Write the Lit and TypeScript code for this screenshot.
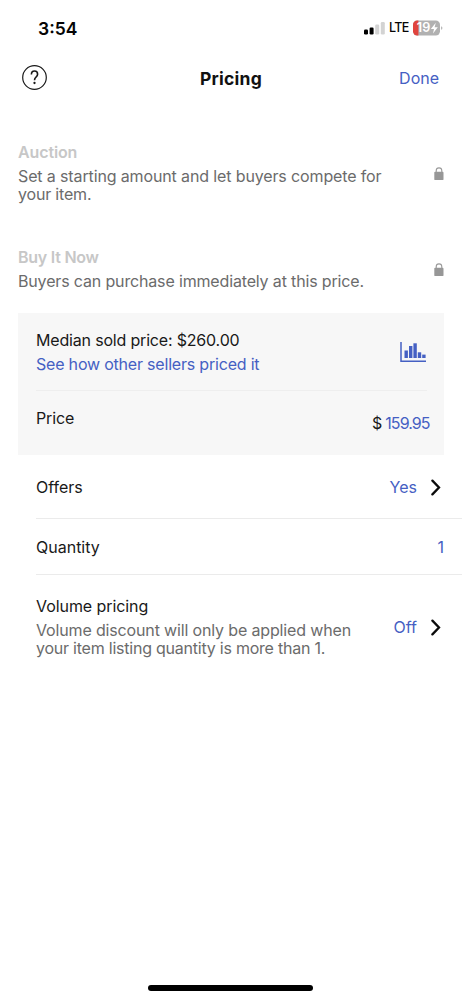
import { LitElement, html, css, svg } from "lit";
import { customElement } from "lit/decorators.js";

@customElement("status-bar")
class StatusBar extends LitElement {
  static styles = css`
    :host { display: flex; height: 56px; box-sizing: border-box; padding: 0 19px 0 38px; justify-content: space-between; align-items: center; color: #050505; }
    .time { font-size: 17.5px; font-weight: 600; line-height: 20px; padding-top: 1px; }
    .right { display: flex; align-items: center; }
    .signal { display: block; margin-right: 4px; }
    .net { font-size: 12.5px; font-weight: 500; line-height: 16px; width: 24px; letter-spacing: -0.6px; }
    svg { display: block; }
  `;
  render() {
    return html`
      <span class="time">3:54</span>
      <div class="right">
        <svg class="signal" width="21" height="14" viewBox="0 0 21 14">
          <rect x="0" y="8.5" width="4" height="5" rx="1.2" fill="#000" />
          <rect x="5.6" y="6.5" width="4" height="7" rx="1.2" fill="#000" />
          <rect x="11.2" y="3.6" width="4" height="9.9" rx="1.2" fill="#d3d3d3" />
          <rect x="16.8" y="1" width="4" height="12.5" rx="1.2" fill="#d3d3d3" />
        </svg>
        <span class="net">LTE</span>
        <svg width="30" height="16" viewBox="0 0 30 16">
          <defs><clipPath id="shell"><rect x="0" y="0.5" width="27" height="15" rx="4.2" /></clipPath></defs>
          <g clip-path="url(#shell)">
            <rect width="27" height="16" fill="#b1b1b1" />
            <rect width="5.4" height="16" fill="#e0443e" />
          </g>
          <path d="M28.2 6.2c1.6.5 1.6 3.1 0 3.6z" fill="#aaa" />
          <text x="3.8" y="12.4" font-family="Inter, sans-serif" font-size="12.5" font-weight="600" fill="#fff" textLength="13.4" lengthAdjust="spacingAndGlyphs">19</text>
          <path d="M22.8 2.8 17.8 9h3.2l-1 4.4 4.8-6.1h-3.2z" fill="#fff" />
        </svg>
      </div>
    `;
  }
}

const lock = html`<svg width="10" height="14" viewBox="0 0 10 14">
  <path d="M2.2 5.5V3.7a2.8 2.8 0 0 1 5.6 0v1.8" fill="none" stroke="#999" stroke-width="1.1" />
  <rect x="0.3" y="4.8" width="9.2" height="8.3" rx="0.9" fill="#979797" />
</svg>`;

const chevron = html`<svg class="chev" width="10" height="17" viewBox="0 0 10 17">
  <path d="M1.4 1.6 8 8.5 1.4 15.4" fill="none" stroke="#0b0b0b" stroke-width="2.3" stroke-linecap="round" stroke-linejoin="miter" />
</svg>`;

const bars = [[4.5, 8.5, 7.5], [9, 4, 12], [13.4, 1.3, 14.7], [17.8, 10.3, 5.7], [22.2, 12.6, 3.4]];

@customElement("app-root")
class AppRoot extends LitElement {
  static styles = css`
    :host { display: flex; flex-direction: column; height: 1000px; background: #fff; font-family: Inter, "Open Sans", sans-serif; font-size: 16px; line-height: 19px; color: #191919; overflow: hidden; white-space: nowrap; }
    svg { display: block; }
    .nav { display: grid; grid-template-columns: 100px 1fr 100px; align-items: center; height: 44px; padding: 0 23px 0 22px; }
    .nav svg { margin-top: -1px; }
    .title { text-align: center; font-weight: 700; font-size: 17.5px; letter-spacing: 0.25px; color: #111; padding: 1px 0 0 1px; }
    .done { text-align: right; }
    .blue { color: #4560c3; }
    .format { display: flex; justify-content: space-between; padding: 0 18px; }
    .auction { margin-top: 43px; height: 105px; box-sizing: border-box; }
    .auction .lock { margin-top: 24px; }
    .bin { height: 65px; }
    .bin .lock { margin-top: 15px; }
    .name { font-weight: 600; color: #c7c7c7; margin-bottom: 4.5px; }
    .desc { color: #6b6b6b; line-height: 18.5px; }
    .panel { margin: 0 18px; height: 142px; background: #f7f7f7; box-sizing: border-box; padding: 18px 14px 0 18px; }
    .median { display: flex; justify-content: space-between; height: 59px; margin-right: 3px; border-bottom: 1px solid #eee; }
    .median .l1 { margin-bottom: 5px; }
    .chart { margin: 11px 1px 0 0; }
    .price { display: flex; justify-content: space-between; padding-top: 18px; }
    .amount { padding-top: 5px; display: flex; gap: 3px; }
    .row { display: flex; justify-content: space-between; align-items: center; margin-left: 36px; padding-right: 18px; box-sizing: border-box; border-bottom: 1px solid #ebebeb; }
    .offers { height: 64px; padding: 1px 21px 0 0; }
    .quantity { height: 56px; padding-top: 1px; }
    .volume { border: 0; height: 105px; padding-right: 21px; }
    .volume .l1 { margin-bottom: 4.5px; }
    .value { display: flex; align-items: center; gap: 14px; }
    .n1 { letter-spacing: -0.12px; }
    .n2 { letter-spacing: -0.25px; }
    .d1 { letter-spacing: -0.13px; }
    .d2 { letter-spacing: -0.18px; }
    .d3 { letter-spacing: -0.155px; }
    .m1 { letter-spacing: -0.18px; }
    .m2 { letter-spacing: -0.2px; }
    .p1 { letter-spacing: -0.15px; }
    .p2 { letter-spacing: -0.95px; margin-right: 0.5px; }
    .v1 { letter-spacing: -0.07px; }
    .v2 { letter-spacing: -0.15px; }
    .v3 { letter-spacing: -0.23px; }
    .home { margin: auto auto 9px 148px; width: 165px; height: 6px; border-radius: 3px; background: #000; }
  `;
  render() {
    return html`
      <status-bar></status-bar>
      <header class="nav">
        <svg width="25" height="25" viewBox="0 0 25 25">
          <circle cx="12.5" cy="12.5" r="11.8" fill="none" stroke="#191919" stroke-width="1.2" />
          <path d="M9.4 9.6c0-2.3 1.2-3.6 3.1-3.6s3.1 1.3 3.1 3.2c0 2.7-3.1 3-3.1 6" fill="none" stroke="#191919" stroke-width="1.6" />
          <circle cx="12.5" cy="18" r="1.15" fill="#191919" />
        </svg>
        <span class="title">Pricing</span>
        <span class="done blue">Done</span>
      </header>
      <section class="format auction">
        <div>
          <div class="name n1">Auction</div>
          <div class="desc d1">Set a starting amount and let buyers compete for</div>
          <div class="desc d2">your item.</div>
        </div>
        <div class="lock">${lock}</div>
      </section>
      <section class="format bin">
        <div>
          <div class="name n2">Buy It Now</div>
          <div class="desc d3">Buyers can purchase immediately at this price.</div>
        </div>
        <div class="lock">${lock}</div>
      </section>
      <section class="panel">
        <div class="median">
          <div>
            <div class="l1 m1">Median sold price: $260.00</div>
            <div class="blue m2">See how other sellers priced it</div>
          </div>
          <svg class="chart" width="26" height="21" viewBox="0 0 26 21">
            <path d="M1 0v19.3h25" fill="none" stroke="#4560c3" stroke-width="1.5" />
            ${bars.map(([x, y, h]) => svg`<rect x=${x} y=${y} width="3.4" height=${h} fill="#4560c3" />`)}
          </svg>
        </div>
        <div class="price">
          <span class="p1">Price</span>
          <span class="amount"><span>$</span><span class="blue p2">159.95</span></span>
        </div>
      </section>
      <section class="row offers">
        <span class="o1">Offers</span>
        <span class="value"><span class="blue o2">Yes</span>${chevron}</span>
      </section>
      <section class="row quantity">
        <span class="q1">Quantity</span>
        <span class="blue">1</span>
      </section>
      <section class="row volume">
        <div>
          <div class="l1 v1">Volume pricing</div>
          <div class="desc v2">Volume discount will only be applied when</div>
          <div class="desc v3">your item listing quantity is more than 1.</div>
        </div>
        <span class="value"><span class="blue v4">Off</span>${chevron}</span>
      </section>
      <div class="home"></div>
    `;
  }
}
